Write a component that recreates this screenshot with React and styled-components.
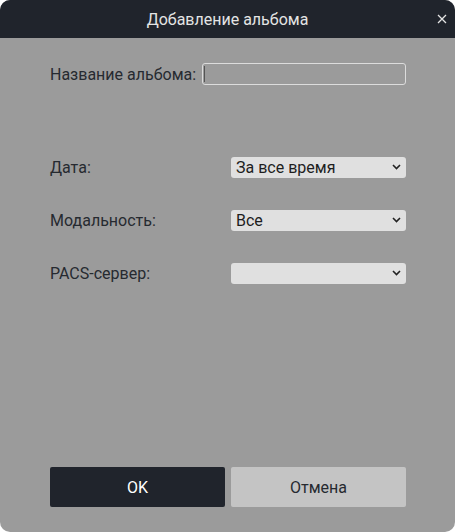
import React from 'react';
import styled, { createGlobalStyle } from 'styled-components';

const GlobalStyle = createGlobalStyle`
  html, body {
    margin: 0;
    padding: 0;
    background: #ffffff;
  }
  * {
    box-sizing: border-box;
  }
`;

const Dialog = styled.div`
  width: 455px;
  height: 532px;
  border-radius: 10px;
  overflow: hidden;
  background: #9b9b9b;
  display: flex;
  flex-direction: column;
  font-family: Roboto, "Noto Sans", sans-serif;
`;

const Header = styled.div`
  height: 38px;
  flex: none;
  background: #20242c;
  color: #e4e4e4;
  font-size: 16px;
  display: flex;
  align-items: center;
  justify-content: center;
  position: relative;
`;

const Close = styled.button`
  position: absolute;
  right: 4px;
  top: 10px;
  width: 18px;
  height: 18px;
  padding: 0;
  border: none;
  background: none;
  display: flex;
  align-items: center;
  justify-content: center;
`;

const Body = styled.div`
  flex: 1;
  display: flex;
  flex-direction: column;
  padding: 25px 49px 25px 50px;
`;

const NameRow = styled.div`
  display: flex;
  align-items: center;
  gap: 6px;
  height: 22px;
`;

const Label = styled.label`
  font-size: 16px;
  color: #262a30;
  white-space: nowrap;
`;

const InputWrap = styled.div`
  flex: 1;
  position: relative;
  height: 22px;
  &::after {
    content: '';
    position: absolute;
    left: 2px;
    top: 3px;
    width: 1px;
    height: 16px;
    background: #555;
  }
`;

const TextInput = styled.input`
  width: 100%;
  height: 100%;
  border: 1px solid #dcdcdc;
  border-radius: 3px;
  background: transparent;
  outline: none;
  font: inherit;
  font-size: 16px;
`;

const Fields = styled.div`
  display: flex;
  flex-direction: column;
  gap: 32px;
  margin-top: 72px;
`;

const Grid = styled.div`
  display: grid;
  grid-template-columns: 1fr 1fr;
  column-gap: 6px;
  align-items: center;
`;

const SelectWrap = styled.div`
  position: relative;
  height: 21px;
  svg {
    position: absolute;
    right: 5px;
    top: 7px;
    pointer-events: none;
  }
`;

const Select = styled.select`
  appearance: none;
  width: 100%;
  height: 21px;
  border: none;
  border-radius: 3px;
  background: #e0e0e0;
  color: #1e1e1e;
  font-family: Roboto, "Noto Sans", sans-serif;
  font-size: 16px;
  padding: 0 20px 0 5px;
  outline: none;
`;

const Buttons = styled(Grid)`
  margin-top: auto;
`;

const Button = styled.button`
  height: 40px;
  border: none;
  border-radius: 2px;
  font-family: Roboto, "Noto Sans", sans-serif;
  font-size: 16px;
  background: ${p => (p.$primary ? '#20242c' : '#c4c4c4')};
  color: ${p => (p.$primary ? '#ffffff' : '#262a30')};
`;

const Chevron = () => (
  <svg width="9" height="6" viewBox="0 0 9 6">
    <path d="M1 1l3.5 3.5L8 1" fill="none" stroke="#222" strokeWidth="1.6" />
  </svg>
);

const SelectField = ({ label, value, options }) => (
  <Grid>
    <Label>{label}</Label>
    <SelectWrap>
      <Select defaultValue={value}>
        {options.map(o => (
          <option key={o}>{o}</option>
        ))}
      </Select>
      <Chevron />
    </SelectWrap>
  </Grid>
);

const App = () => {
  return (
    <>
      <GlobalStyle />
      <Dialog>
        <Header>
          Добавление альбома
          <Close>
            <svg width="10" height="10" viewBox="0 0 10 10">
              <path d="M1 1l8 8M9 1l-8 8" stroke="#e4e4e4" strokeWidth="1.3" />
            </svg>
          </Close>
        </Header>
        <Body>
          <NameRow>
            <Label>Название альбома:</Label>
            <InputWrap>
              <TextInput />
            </InputWrap>
          </NameRow>
          <Fields>
            <SelectField label="Дата:" value="За все время" options={['За все время']} />
            <SelectField label="Модальность:" value="Все" options={['Все']} />
            <SelectField label="PACS-сервер:" value="" options={['']} />
          </Fields>
          <Buttons>
            <Button $primary>OK</Button>
            <Button>Отмена</Button>
          </Buttons>
        </Body>
      </Dialog>
    </>
  );
};

export default App;
